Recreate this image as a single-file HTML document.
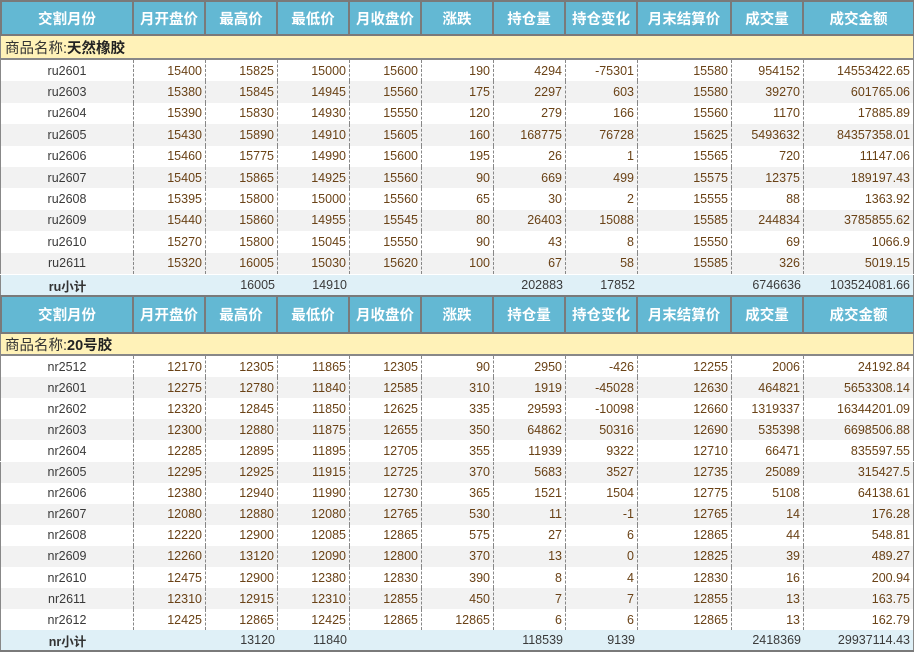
<!DOCTYPE html><html><head><meta charset="utf-8"><style>
*{margin:0;padding:0;box-sizing:border-box}
body{width:914px;height:652px;background:#fff;font-family:"Liberation Sans","Noto Sans CJK SC",sans-serif;position:relative;overflow:hidden}
.r{position:absolute;left:0;width:914px;display:flex;border-left:1px solid #888;border-right:1px solid #888}
.r div{flex:none;font-size:12.5px;color:#6a4216;text-align:right;padding-right:3px;border-right:1px dashed #888;display:flex;align-items:center;justify-content:flex-end;height:100%}
.r div:first-child{justify-content:center;color:#3a3a3a;padding:0}
.r div:last-child{border-right:none}
.c1{width:133px}.c2,.c3,.c4,.c5,.c6,.c7,.c8,.c10{width:72px}.c9{width:94px}.c11{width:109px}
.h{background:#63b8d3;border-top:2px solid #7a7a7a;border-bottom:2px solid #7a7a7a;border-left:2px solid #7a7a7a;border-right:1px solid #7a7a7a}
.h div{justify-content:center!important;color:#fff!important;font-weight:bold;font-size:14.5px!important;border-right:2px solid #7a7a7a!important;padding:0!important}
.h div:last-child{border-right:none!important}
.cat{position:absolute;left:0;width:914px;background:#fff2b8;border-left:1px solid #888;border-right:1px solid #888;border-bottom:2px solid #888;font-size:14.5px;color:#333;padding-left:4px;display:flex;align-items:center}
.cat b{color:#222}
.g{background:#f2f2f2}
.s{background:#dff0f7}
.s div{border-right:none!important;color:#3a3a3a!important}
.s div:first-child{font-weight:bold;color:#333!important}
</style></head><body>
<div class="r h" style="top:0;height:36px"><div class="c1" style="width:132px">交割月份</div><div class="c2">月开盘价</div><div class="c3">最高价</div><div class="c4">最低价</div><div class="c5">月收盘价</div><div class="c6">涨跌</div><div class="c7">持仓量</div><div class="c8">持仓变化</div><div class="c9">月末结算价</div><div class="c10">成交量</div><div class="c11">成交金额</div></div>
<div class="cat" style="top:36px;height:24px">商品名称:<b>天然橡胶</b></div>
<div class="r" style="top:60px;height:21.4px"><div class="c1">ru2601</div><div class="c2">15400</div><div class="c3">15825</div><div class="c4">15000</div><div class="c5">15600</div><div class="c6">190</div><div class="c7">4294</div><div class="c8">-75301</div><div class="c9">15580</div><div class="c10">954152</div><div class="c11">14553422.65</div></div>
<div class="r g" style="top:81.4px;height:21.4px"><div class="c1">ru2603</div><div class="c2">15380</div><div class="c3">15845</div><div class="c4">14945</div><div class="c5">15560</div><div class="c6">175</div><div class="c7">2297</div><div class="c8">603</div><div class="c9">15580</div><div class="c10">39270</div><div class="c11">601765.06</div></div>
<div class="r" style="top:102.8px;height:21.4px"><div class="c1">ru2604</div><div class="c2">15390</div><div class="c3">15830</div><div class="c4">14930</div><div class="c5">15550</div><div class="c6">120</div><div class="c7">279</div><div class="c8">166</div><div class="c9">15560</div><div class="c10">1170</div><div class="c11">17885.89</div></div>
<div class="r g" style="top:124.2px;height:21.4px"><div class="c1">ru2605</div><div class="c2">15430</div><div class="c3">15890</div><div class="c4">14910</div><div class="c5">15605</div><div class="c6">160</div><div class="c7">168775</div><div class="c8">76728</div><div class="c9">15625</div><div class="c10">5493632</div><div class="c11">84357358.01</div></div>
<div class="r" style="top:145.6px;height:21.4px"><div class="c1">ru2606</div><div class="c2">15460</div><div class="c3">15775</div><div class="c4">14990</div><div class="c5">15600</div><div class="c6">195</div><div class="c7">26</div><div class="c8">1</div><div class="c9">15565</div><div class="c10">720</div><div class="c11">11147.06</div></div>
<div class="r g" style="top:167px;height:21.4px"><div class="c1">ru2607</div><div class="c2">15405</div><div class="c3">15865</div><div class="c4">14925</div><div class="c5">15560</div><div class="c6">90</div><div class="c7">669</div><div class="c8">499</div><div class="c9">15575</div><div class="c10">12375</div><div class="c11">189197.43</div></div>
<div class="r" style="top:188.4px;height:21.4px"><div class="c1">ru2608</div><div class="c2">15395</div><div class="c3">15800</div><div class="c4">15000</div><div class="c5">15560</div><div class="c6">65</div><div class="c7">30</div><div class="c8">2</div><div class="c9">15555</div><div class="c10">88</div><div class="c11">1363.92</div></div>
<div class="r g" style="top:209.8px;height:21.4px"><div class="c1">ru2609</div><div class="c2">15440</div><div class="c3">15860</div><div class="c4">14955</div><div class="c5">15545</div><div class="c6">80</div><div class="c7">26403</div><div class="c8">15088</div><div class="c9">15585</div><div class="c10">244834</div><div class="c11">3785855.62</div></div>
<div class="r" style="top:231.2px;height:21.4px"><div class="c1">ru2610</div><div class="c2">15270</div><div class="c3">15800</div><div class="c4">15045</div><div class="c5">15550</div><div class="c6">90</div><div class="c7">43</div><div class="c8">8</div><div class="c9">15550</div><div class="c10">69</div><div class="c11">1066.9</div></div>
<div class="r g" style="top:252.6px;height:21.4px"><div class="c1">ru2611</div><div class="c2">15320</div><div class="c3">16005</div><div class="c4">15030</div><div class="c5">15620</div><div class="c6">100</div><div class="c7">67</div><div class="c8">58</div><div class="c9">15585</div><div class="c10">326</div><div class="c11">5019.15</div></div>
<div class="r s" style="top:275px;height:20px"><div class="c1">ru小计</div><div class="c2"></div><div class="c3">16005</div><div class="c4">14910</div><div class="c5"></div><div class="c6"></div><div class="c7">202883</div><div class="c8">17852</div><div class="c9"></div><div class="c10">6746636</div><div class="c11">103524081.66</div></div>
<div class="r h" style="top:295px;height:39px"><div class="c1" style="width:132px">交割月份</div><div class="c2">月开盘价</div><div class="c3">最高价</div><div class="c4">最低价</div><div class="c5">月收盘价</div><div class="c6">涨跌</div><div class="c7">持仓量</div><div class="c8">持仓变化</div><div class="c9">月末结算价</div><div class="c10">成交量</div><div class="c11">成交金额</div></div>
<div class="cat" style="top:334px;height:22px">商品名称:<b>20号胶</b></div>
<div class="r" style="top:356px;height:21.1px"><div class="c1">nr2512</div><div class="c2">12170</div><div class="c3">12305</div><div class="c4">11865</div><div class="c5">12305</div><div class="c6">90</div><div class="c7">2950</div><div class="c8">-426</div><div class="c9">12255</div><div class="c10">2006</div><div class="c11">24192.84</div></div>
<div class="r g" style="top:377.1px;height:21.1px"><div class="c1">nr2601</div><div class="c2">12275</div><div class="c3">12780</div><div class="c4">11840</div><div class="c5">12585</div><div class="c6">310</div><div class="c7">1919</div><div class="c8">-45028</div><div class="c9">12630</div><div class="c10">464821</div><div class="c11">5653308.14</div></div>
<div class="r" style="top:398.2px;height:21.1px"><div class="c1">nr2602</div><div class="c2">12320</div><div class="c3">12845</div><div class="c4">11850</div><div class="c5">12625</div><div class="c6">335</div><div class="c7">29593</div><div class="c8">-10098</div><div class="c9">12660</div><div class="c10">1319337</div><div class="c11">16344201.09</div></div>
<div class="r g" style="top:419.3px;height:21.1px"><div class="c1">nr2603</div><div class="c2">12300</div><div class="c3">12880</div><div class="c4">11875</div><div class="c5">12655</div><div class="c6">350</div><div class="c7">64862</div><div class="c8">50316</div><div class="c9">12690</div><div class="c10">535398</div><div class="c11">6698506.88</div></div>
<div class="r" style="top:440.4px;height:21.1px"><div class="c1">nr2604</div><div class="c2">12285</div><div class="c3">12895</div><div class="c4">11895</div><div class="c5">12705</div><div class="c6">355</div><div class="c7">11939</div><div class="c8">9322</div><div class="c9">12710</div><div class="c10">66471</div><div class="c11">835597.55</div></div>
<div class="r g" style="top:461.5px;height:21.1px"><div class="c1">nr2605</div><div class="c2">12295</div><div class="c3">12925</div><div class="c4">11915</div><div class="c5">12725</div><div class="c6">370</div><div class="c7">5683</div><div class="c8">3527</div><div class="c9">12735</div><div class="c10">25089</div><div class="c11">315427.5</div></div>
<div class="r" style="top:482.6px;height:21.1px"><div class="c1">nr2606</div><div class="c2">12380</div><div class="c3">12940</div><div class="c4">11990</div><div class="c5">12730</div><div class="c6">365</div><div class="c7">1521</div><div class="c8">1504</div><div class="c9">12775</div><div class="c10">5108</div><div class="c11">64138.61</div></div>
<div class="r g" style="top:503.7px;height:21.1px"><div class="c1">nr2607</div><div class="c2">12080</div><div class="c3">12880</div><div class="c4">12080</div><div class="c5">12765</div><div class="c6">530</div><div class="c7">11</div><div class="c8">-1</div><div class="c9">12765</div><div class="c10">14</div><div class="c11">176.28</div></div>
<div class="r" style="top:524.8px;height:21.1px"><div class="c1">nr2608</div><div class="c2">12220</div><div class="c3">12900</div><div class="c4">12085</div><div class="c5">12865</div><div class="c6">575</div><div class="c7">27</div><div class="c8">6</div><div class="c9">12865</div><div class="c10">44</div><div class="c11">548.81</div></div>
<div class="r g" style="top:545.9px;height:21.1px"><div class="c1">nr2609</div><div class="c2">12260</div><div class="c3">13120</div><div class="c4">12090</div><div class="c5">12800</div><div class="c6">370</div><div class="c7">13</div><div class="c8">0</div><div class="c9">12825</div><div class="c10">39</div><div class="c11">489.27</div></div>
<div class="r" style="top:567px;height:21.1px"><div class="c1">nr2610</div><div class="c2">12475</div><div class="c3">12900</div><div class="c4">12380</div><div class="c5">12830</div><div class="c6">390</div><div class="c7">8</div><div class="c8">4</div><div class="c9">12830</div><div class="c10">16</div><div class="c11">200.94</div></div>
<div class="r g" style="top:588.1px;height:21.1px"><div class="c1">nr2611</div><div class="c2">12310</div><div class="c3">12915</div><div class="c4">12310</div><div class="c5">12855</div><div class="c6">450</div><div class="c7">7</div><div class="c8">7</div><div class="c9">12855</div><div class="c10">13</div><div class="c11">163.75</div></div>
<div class="r" style="top:609.2px;height:21.1px"><div class="c1">nr2612</div><div class="c2">12425</div><div class="c3">12865</div><div class="c4">12425</div><div class="c5">12865</div><div class="c6">12865</div><div class="c7">6</div><div class="c8">6</div><div class="c9">12865</div><div class="c10">13</div><div class="c11">162.79</div></div>
<div class="r s" style="top:630.3px;height:19.7px"><div class="c1">nr小计</div><div class="c2"></div><div class="c3">13120</div><div class="c4">11840</div><div class="c5"></div><div class="c6"></div><div class="c7">118539</div><div class="c8">9139</div><div class="c9"></div><div class="c10">2418369</div><div class="c11">29937114.43</div></div>
<div style="position:absolute;left:0;top:650px;width:914px;height:2px;background:#7a7a7a"></div>
</body></html>
